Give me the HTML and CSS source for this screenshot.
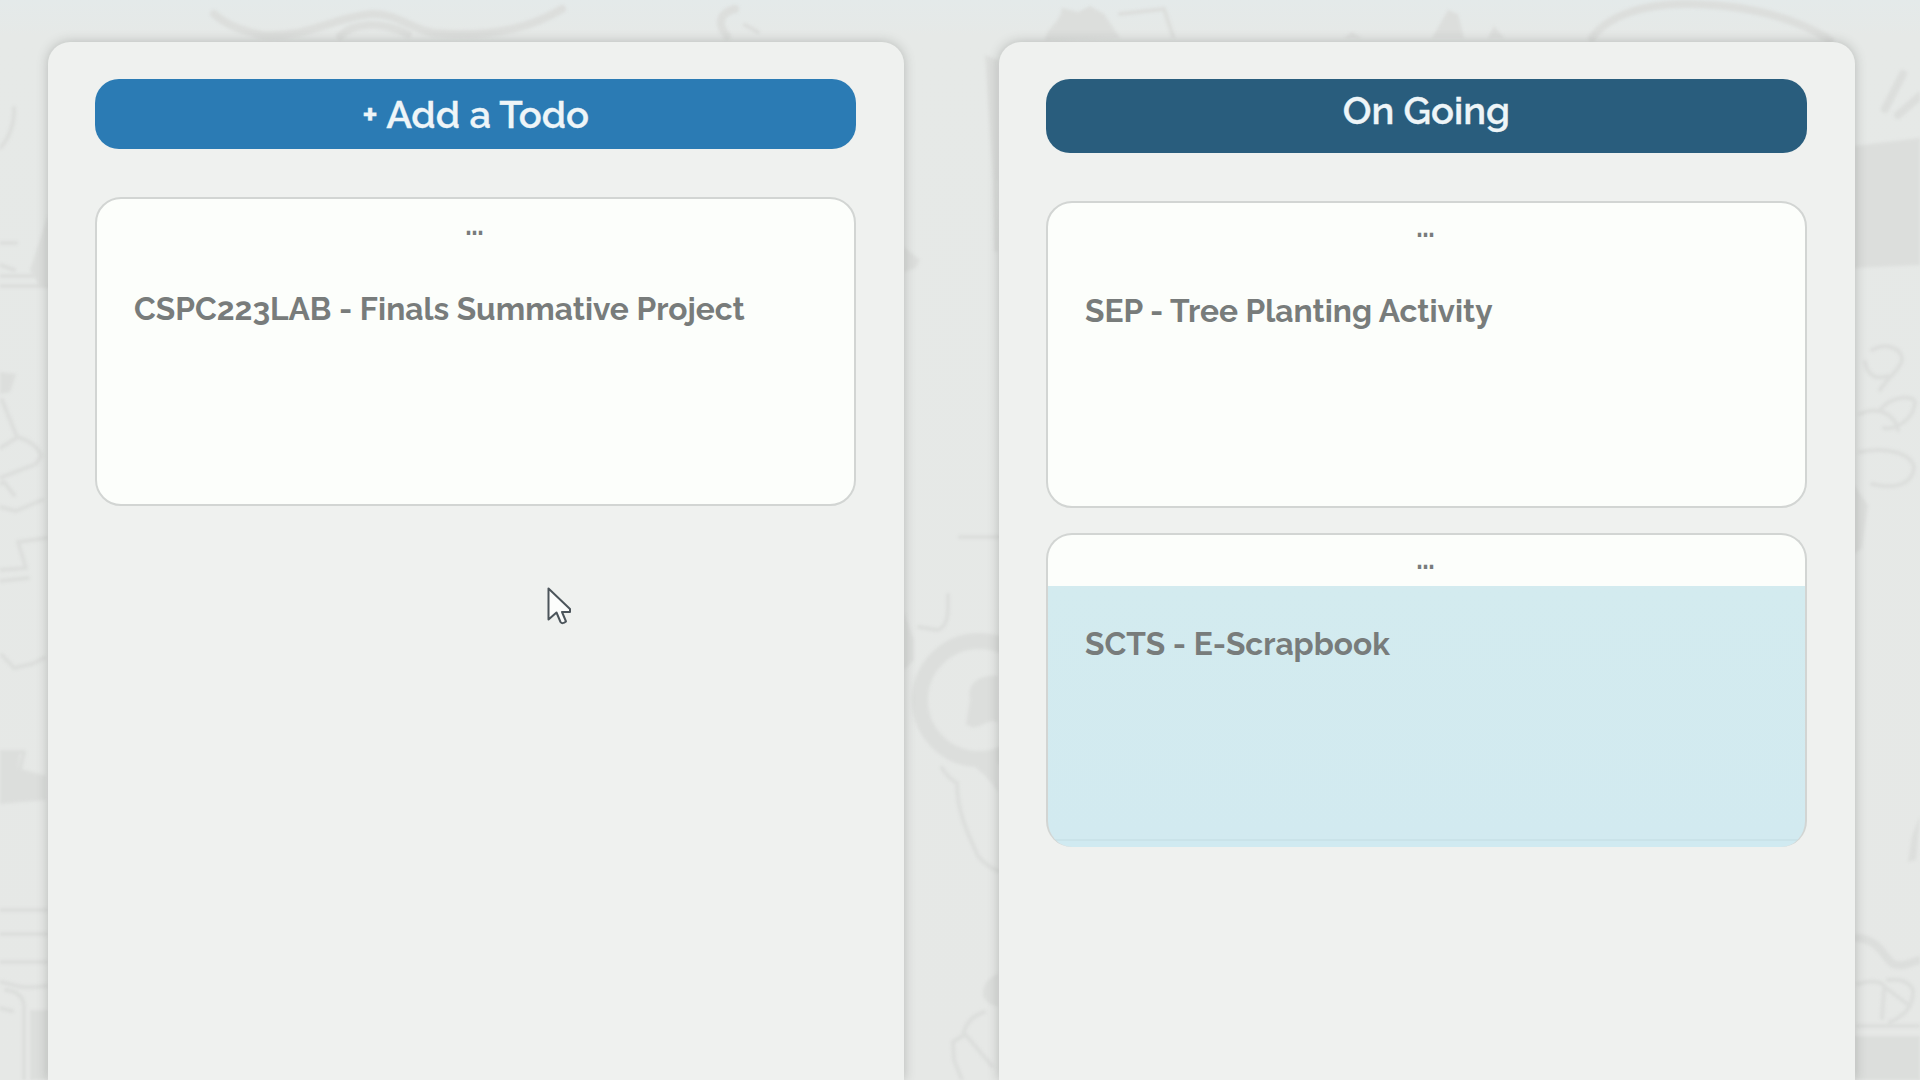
FILE: index.html
```html
<!DOCTYPE html>
<html lang="en">
<head>
<meta charset="utf-8">
<title>Todo board</title>
<link rel="stylesheet" href="styles.css">
</head>
<body>
<svg class="doodles" viewBox="0 0 1920 1080" aria-hidden="true">
  <g class="line">
    <!-- top edge -->
    <path class="thick" d="M214 14C228 26 240 30 262 35C310 38 330 18 372 14C400 14 410 30 435 33C500 38 535 25 562 9"/>
    <path class="thick" d="M340 36C352 24 378 20 408 34"/>
    <path class="thick" d="M727 36C715 22 722 12 735 9"/>
    <path d="M745 25L758 32M1120 14L1164 9L1173 36"/>
    <path class="thick" d="M1592 38C1606 18 1640 3 1690 4C1750 5 1795 18 1830 40"/>
    <!-- left edge -->
    <path d="M14 108C15 124 8 140 0 148M0 243H16M0 265L14 270M0 276H40M0 286H48M2 400L17 437M0 448L18 437Q38 444 41 456L36 464L0 478M4 482L14 495M0 507L16 511L42 500M0 484L4 482M18 542L46 538M18 542L26 568L0 570M0 581L28 578M2 655L14 668L32 664L44 658M0 752H24L20 770M0 910H46M0 934H46M0 962H46M0 982C16 984 14 990 46 986M0 1008L12 1011M24 1080V1008Q24 992 6 990"/>
    <!-- middle gap -->
    <path d="M948 595V610Q947 628 937 630L919 627M960 537H998M993 70L996 250"/>
    <circle class="ring" cx="979" cy="700" r="59"/>
    <path d="M942 768Q948 778 957 783C957 810 966 830 978 856Q986 866 998 871M984 1012Q966 1018 963 1036M953 1042L954 1060L962 1080M965 1034L992 1066M953 1042L965 1034"/>
    <!-- right edge -->
    <path class="thick" d="M1903 74L1885 109M1920 96L1898 115"/>
    <path d="M1872 350C1886 342 1902 348 1902 360C1900 370 1888 377 1880 390M1865 362C1868 376 1876 380 1888 376M1880 410C1890 397 1912 394 1915 402C1914 420 1895 430 1884 428M1860 414C1882 404 1896 418 1898 430M1860 452C1890 446 1913 455 1914 468C1912 484 1896 490 1872 484"/>
    <path d="M1858 984C1875 978 1888 984 1884 990L1882 1018M1888 980Q1908 978 1913 990Q1914 1012 1890 1022M1886 988L1910 1006M1858 1026H1918"/>
    <path class="thick" d="M1858 938C1880 940 1884 958 1893 964C1904 968 1910 962 1920 960"/>
  </g>
  <g class="fill">
    <path d="M1045 40C1048 25 1060 24 1062 8L1078 12L1090 6L1104 14L1120 38ZM1432 38L1448 10L1458 14L1464 38ZM1344 38L1352 32L1362 38ZM1488 38L1494 26L1504 38Z"/>
    <path d="M30 270L48 215V286H40ZM904 247L920 260L916 268L904 272ZM985 55L998 60V180L993 180Z"/>
    <path d="M1854 146L1920 138V265L1854 268ZM1854 485L1868 505L1862 548L1854 554Z"/>
    <path d="M0 372L16 374L10 392L0 394ZM0 750L20 752L18 768L46 776V800L0 804ZM904 612L914 640V660L904 670ZM998 676C984 674 966 680 970 700L966 724C978 734 984 718 998 722ZM962 760L998 752V792Q982 768 962 760ZM998 974Q982 980 983 996Q988 1006 998 1006Z"/>
    <path d="M1920 816L1916 860L1908 862L1912 836ZM1854 1036H1920V1080H1854ZM30 1010H48V1080H30Z"/>
  </g>
</svg>

<main class="board">
  <section class="column">
    <button class="heading heading-add">+ Add a Todo</button>
    <article class="card card-todo">
      <span class="handle">...</span>
      <h2 class="title">CSPC223LAB - Finals Summative Project</h2>
    </article>
  </section>
  <section class="column">
    <h1 class="heading heading-ongoing">On Going</h1>
    <article class="card">
      <span class="handle">...</span>
      <h2 class="title">SEP - Tree Planting Activity</h2>
    </article>
    <article class="card card-active">
      <span class="handle">...</span>
      <h2 class="title">SCTS - E-Scrapbook</h2>
    </article>
  </section>
</main>

<svg class="cursor" viewBox="0 0 26 40" aria-hidden="true">
  <path d="M1.5 1.5V32.5L9.5 25.5L13.5 35Q15.5 37.5 19 34.5L15 25H23V22Z"/>
</svg>
</body>
</html>
```
FILE: styles.css
```css
* { box-sizing: border-box; }

body {
  margin: 0;
  width: 1920px;
  height: 1080px;
  overflow: hidden;
  position: relative;
  background: linear-gradient(#e4eaea 0, #e6e9e7 36px, #e6e8e6 100%);
  font-family: Raleway, Lato, sans-serif;
  color: #787c7b;
}

.doodles {
  position: absolute;
  inset: 0;
  width: 1920px;
  height: 1080px;
  filter: blur(1.5px);
}
.line { fill: none; stroke: #dcdedc; stroke-width: 4; stroke-linecap: round; stroke-linejoin: round; }
.thick { stroke-width: 8; }
.ring { stroke-width: 16; }
.fill { fill: #dcdedc; }

.board {
  position: relative;
  display: flex;
  gap: 95px;
  padding: 42px 0 0 48px;
}

.column {
  width: 856px;
  height: 1038px;
  padding: 37px 48px 0 47px;
  border-radius: 22px 22px 0 0;
  background: #eff1ef;
  box-shadow: 0 0 12px rgba(80, 85, 80, .32);
}

.heading {
  display: block;
  width: 761px;
  margin: 0;
  padding: 0;
  border: 0;
  border-radius: 24px;
  color: #eef5f8;
  font-family: inherit;
  font-size: 38.2px;
  font-weight: 600;
  -webkit-text-stroke: .3px currentColor;
  text-align: center;
}
.heading-add { height: 70px; line-height: 72px; background: #2b7bb4; }
.heading-ongoing { height: 74px; line-height: 64px; background: #295d7d; }

.card {
  width: 761px;
  height: 307px;
  margin-top: 48px;
  border: 2px solid #d2d5d3;
  border-radius: 26px;
  background: #fcfefb;
  display: flex;
  flex-direction: column;
}
.card-todo { height: 309px; }
.card + .card { margin-top: 25px; }

.handle {
  height: 50px;
  padding-right: 2px;
  line-height: 51px;
  text-align: center;
  font-size: 25px;
  font-weight: 800;
}
.card-todo .handle { height: 52px; line-height: 54px; }

.title {
  margin: 0;
  padding: 38px 0 0 37px;
  font-size: 31.7px;
  line-height: 40px;
  font-weight: 700;
  white-space: nowrap;
}

.card-active {
  height: 314px;
  border-bottom: 0;
  background: linear-gradient(#fcfefb 51px, #d3ebef 51px, #d2eaf0 304px, #cae3e9 304px, #cae3e9 306px, #d0eaf1 306px);
}
.card-active .title { padding-top: 39px; }

.cursor {
  position: absolute;
  left: 547px;
  top: 587px;
  width: 26px;
  height: 40px;
  fill: #fcfdfc;
  stroke: #4c555b;
  stroke-width: 2;
  stroke-linejoin: round;
}
```
